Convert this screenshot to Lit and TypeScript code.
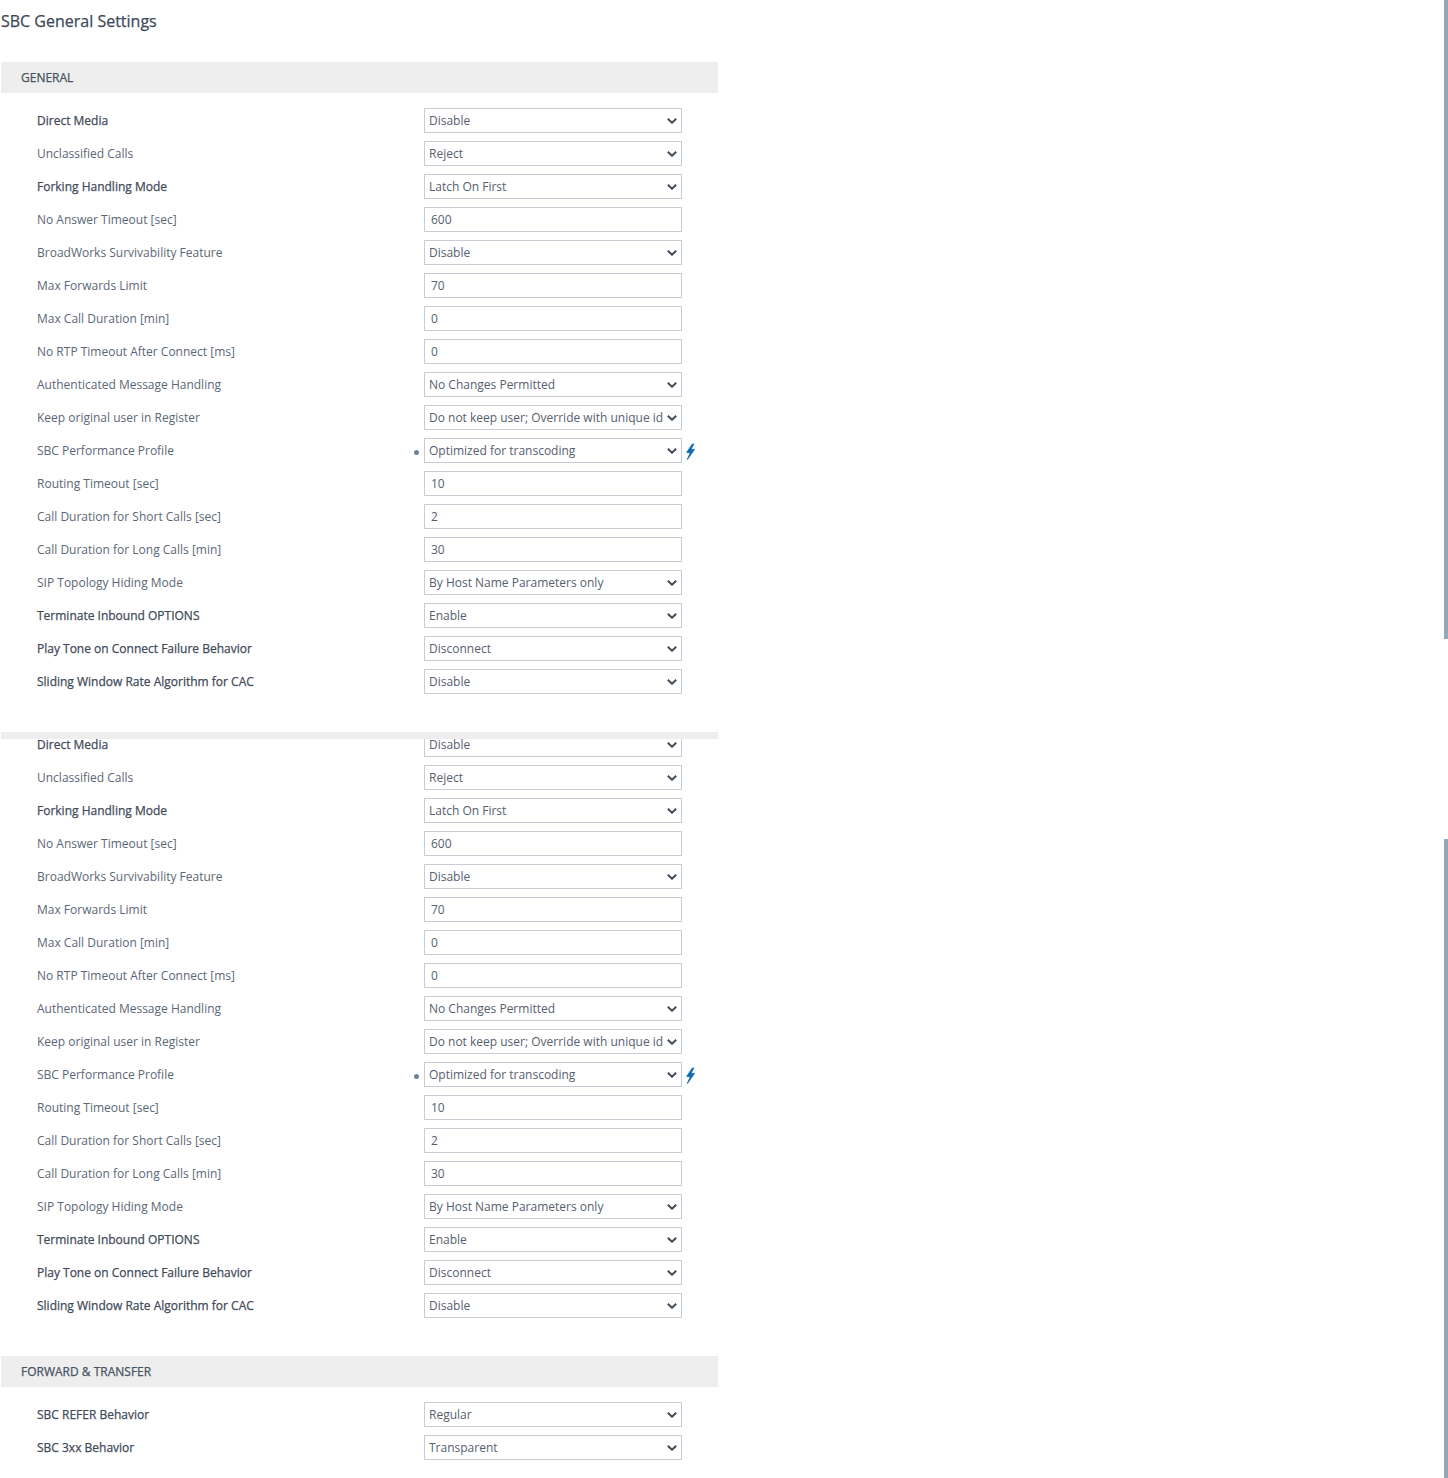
import { LitElement, html, css, nothing } from "lit";
import { customElement } from "lit/decorators.js";

type Row = { label: string; value: string; kind: "select" | "input"; bold?: boolean; flagged?: boolean };

const GENERAL: Row[] = [
  { label: "Direct Media", value: "Disable", kind: "select", bold: true },
  { label: "Unclassified Calls", value: "Reject", kind: "select" },
  { label: "Forking Handling Mode", value: "Latch On First", kind: "select", bold: true },
  { label: "No Answer Timeout [sec]", value: "600", kind: "input" },
  { label: "BroadWorks Survivability Feature", value: "Disable", kind: "select" },
  { label: "Max Forwards Limit", value: "70", kind: "input" },
  { label: "Max Call Duration [min]", value: "0", kind: "input" },
  { label: "No RTP Timeout After Connect [ms]", value: "0", kind: "input" },
  { label: "Authenticated Message Handling", value: "No Changes Permitted", kind: "select" },
  { label: "Keep original user in Register", value: "Do not keep user; Override with unique id", kind: "select" },
  { label: "SBC Performance Profile", value: "Optimized for transcoding", kind: "select", flagged: true },
  { label: "Routing Timeout [sec]", value: "10", kind: "input" },
  { label: "Call Duration for Short Calls [sec]", value: "2", kind: "input" },
  { label: "Call Duration for Long Calls [min]", value: "30", kind: "input" },
  { label: "SIP Topology Hiding Mode", value: "By Host Name Parameters only", kind: "select" },
  { label: "Terminate Inbound OPTIONS", value: "Enable", kind: "select", bold: true },
  { label: "Play Tone on Connect Failure Behavior", value: "Disconnect", kind: "select", bold: true },
  { label: "Sliding Window Rate Algorithm for CAC", value: "Disable", kind: "select", bold: true },
];

const FORWARD: Row[] = [
  { label: "SBC REFER Behavior", value: "Regular", kind: "select", bold: true },
  { label: "SBC 3xx Behavior", value: "Transparent", kind: "select", bold: true },
];

@customElement("app-root")
export class AppRoot extends LitElement {
  static styles = css`
    :host {
      display: block;
      position: relative;
      width: 1448px;
      height: 1478px;
      overflow: hidden;
      background: #fff;
      font-family: "Open Sans", "Noto Sans", sans-serif;
      font-size: 12px;
      color: #5b6776;
    }
    h1 {
      margin: 0;
      height: 62px;
      padding: 10px 0 0 1px;
      box-sizing: border-box;
      font-size: 16px;
      font-weight: 400;
      line-height: 22px;
      color: #3c4858;
      -webkit-text-stroke: 0.25px #3c4858;
    }
    .band {
      box-sizing: border-box;
      margin-left: 1px;
      width: 717px;
      height: 31px;
      padding-left: 20px;
      background: #eeeeee;
      font-weight: 400;
      font-size: 12px;
      line-height: 31px;
      color: #46525f;
      -webkit-text-stroke: 0.25px #46525f;
      text-transform: uppercase;
    }
    .rows {
      display: flex;
      flex-direction: column;
      gap: 8px;
      padding: 15px 0 38px 37px;
    }
    .stuck {
      position: relative;
    }
    .stuck .rows {
      padding-top: 0;
    }
    .sliver {
      position: absolute;
      top: 0;
      left: 1px;
      width: 717px;
      height: 7px;
      background: #eeeeee;
    }
    .row {
      display: grid;
      grid-template-columns: 375px 12px 258px 14px;
      align-items: center;
      height: 25px;
    }
    .label {
      line-height: 25px;
      white-space: nowrap;
    }
    .label.bold {
      color: #3f4a59;
      -webkit-text-stroke: 0.25px #3f4a59;
    }
    .dot {
      width: 5px;
      height: 5px;
      margin-left: 2px;
      margin-top: 3px;
      border-radius: 50%;
      background: #6e8196;
    }
    select,
    input {
      box-sizing: border-box;
      width: 258px;
      height: 25px;
      margin: 0;
      border: 1px solid #c8ccd6;
      border-radius: 0;
      background-color: #fff;
      font-family: inherit;
      font-size: 12px;
      color: #56606e;
      outline: none;
    }
    select {
      appearance: none;
      -webkit-appearance: none;
      padding: 0 17px 0 4px;
      background-image: url("data:image/svg+xml,%3Csvg xmlns='http://www.w3.org/2000/svg' width='10' height='6' viewBox='0 0 10 6'%3E%3Cpath d='M0.8 0.8 L5 4.7 L9.2 0.8' fill='none' stroke='%233f4a59' stroke-width='2'/%3E%3C/svg%3E");
      background-repeat: no-repeat;
      background-position: right 4px center;
    }
    input {
      padding: 0 6px;
    }
    .bolt {
      display: block;
      align-self: start;
      margin-left: 3px;
      margin-top: 5px;
    }
    .thumb {
      position: absolute;
      right: 0;
      width: 4px;
      background: #8fa8bb;
    }
    .thumb.one {
      top: 0;
      height: 639px;
    }
    .thumb.two {
      top: 839px;
      height: 639px;
    }
  `;

  private renderRow(r: Row) {
    return html`<div class="row">
      <div class="label ${r.bold ? "bold" : ""}">${r.label}</div>
      ${r.flagged ? html`<div class="dot"></div>` : html`<div></div>`}
      ${r.kind === "select"
        ? html`<select><option>${r.value}</option></select>`
        : html`<input type="text" .value=${r.value} />`}
      ${r.flagged
        ? html`<svg class="bolt" width="11" height="17" viewBox="0 0 11 17">
            <path d="M7.4 1 L1.7 9.5 L5.4 9.5 L2.4 16.4 L9.5 6.4 L5.9 6.4 L8.8 1 Z" fill="#0b6bb5" stroke="#0b6bb5" stroke-width="0.9" stroke-linejoin="round"></path>
          </svg>`
        : nothing}
    </div>`;
  }

  render() {
    return html`
      <h1>SBC General Settings</h1>
      <section>
        <div class="band">General</div>
        <div class="rows">${GENERAL.map((r) => this.renderRow(r))}</div>
      </section>
      <section class="stuck">
        <div class="rows">${GENERAL.map((r) => this.renderRow(r))}</div>
        <div class="sliver"></div>
      </section>
      <section>
        <div class="band">Forward &amp; Transfer</div>
        <div class="rows">${FORWARD.map((r) => this.renderRow(r))}</div>
      </section>
      <div class="thumb one"></div>
      <div class="thumb two"></div>
    `;
  }
}
